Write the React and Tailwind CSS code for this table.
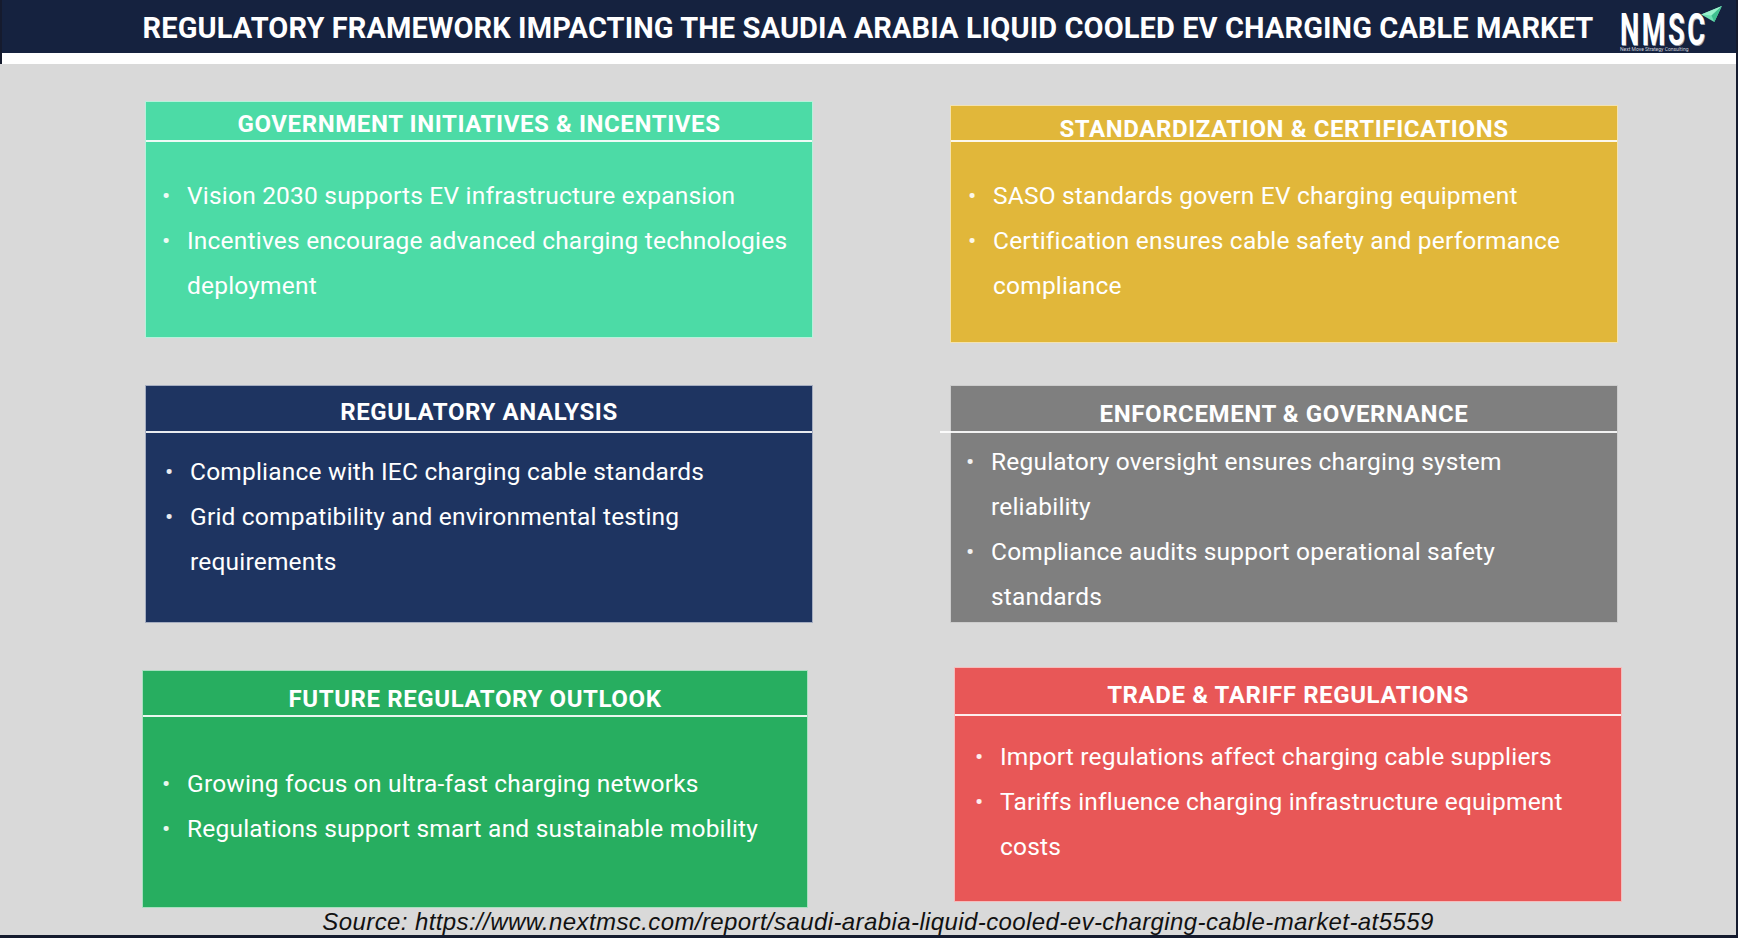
import React from "react";

const cards = [
  {
    key: "gov",
    bg: "bg-[#4cdba6]",
    title: "GOVERNMENT INITIATIVES & INCENTIVES",
    wrap: "mt-[37px] ml-[145px] w-[668px] h-[237px]",
    head: "h-[38px] pt-[8px]",
    body: "pt-[31px] pl-[16px]",
    items: [["Vision 2030 supports EV infrastructure expansion"], ["Incentives encourage advanced charging technologies", "deployment"]],
  },
  {
    key: "std",
    bg: "bg-[#e1b73a]",
    title: "STANDARDIZATION & CERTIFICATIONS",
    wrap: "mt-[41px] ml-[137px] w-[668px] h-[238px]",
    head: "h-[34px] pt-[9px]",
    body: "pt-[31px] pl-[17px]",
    items: [["SASO standards govern EV charging equipment"], ["Certification ensures cable safety and performance", "compliance"]],
  },
  {
    key: "reg",
    bg: "bg-[#1e3461]",
    title: "REGULATORY ANALYSIS",
    wrap: "mt-[42px] ml-[145px] w-[668px] h-[238px]",
    head: "h-[45px] pt-[12px]",
    body: "pt-[16px] pl-[19px]",
    items: [["Compliance with IEC charging cable standards"], ["Grid compatibility and environmental testing", "requirements"]],
  },
  {
    key: "enf",
    bg: "bg-[#7f7f7f]",
    title: "ENFORCEMENT & GOVERNANCE",
    wrap: "mt-[42px] ml-[137px] w-[668px] h-[238px]",
    head: "h-[45px] pt-[14px]",
    body: "pt-[6px] pl-[15px]",
    extendLine: true,
    items: [["Regulatory oversight ensures charging system", "reliability"], ["Compliance audits support operational safety", "standards"]],
  },
  {
    key: "fut",
    bg: "bg-[#27ae60]",
    title: "FUTURE REGULATORY OUTLOOK",
    wrap: "mt-[47px] ml-[142px] w-[666px] h-[238px]",
    head: "h-[44px] pt-[14px]",
    body: "pt-[44px] pl-[19px]",
    items: [["Growing focus on ultra-fast charging networks"], ["Regulations support smart and sustainable mobility"]],
  },
  {
    key: "trade",
    bg: "bg-[#e85757]",
    title: "TRADE & TARIFF REGULATIONS",
    wrap: "mt-[44px] ml-[146px] w-[668px] h-[235px]",
    head: "h-[46px] pt-[13px]",
    body: "pt-[18px] pl-[20px]",
    items: [["Import regulations affect charging cable suppliers"], ["Tariffs influence charging infrastructure equipment", "costs"]],
  },
];

function Card({ c }) {
  return (
    <div className={`${c.wrap} ${c.bg} shrink-0 border border-white/60 text-white`}>
      <div className={`${c.head} text-center text-[24px] leading-[28px] font-bold tracking-[0.6px] whitespace-nowrap`}>
        {c.title}
      </div>
      <div className={`h-[1.5px] bg-white/90 ${c.extendLine ? "-ml-[11px]" : ""}`} />
      <ul className={`${c.body} text-[24.5px] leading-[45px] tracking-[0.2px]`}>
        {c.items.map((lines, i) => (
          <li key={i} className="flex">
            <span className="w-[25px] shrink-0 text-white/90">•</span>
            <span className="whitespace-nowrap">
              {lines.map((l, j) => (
                <React.Fragment key={j}>
                  {j > 0 && <br />}
                  {l}
                </React.Fragment>
              ))}
            </span>
          </li>
        ))}
      </ul>
    </div>
  );
}

function Logo() {
  return (
    <div className="w-[120px] h-full flex flex-col pl-[4px] pt-[15px]">
      <div className="flex items-start h-[31px]">
        <span
          className="inline-block origin-left scale-x-[0.62] text-[44px] leading-[31px] font-bold tracking-[4px] text-white"
          style={{ fontFamily: "Roboto, sans-serif", textShadow: "1px 1px 0 #9ca3af" }}
        >
          NMSC
        </span>
        <svg width="21" height="16" viewBox="0 0 22 17" className="-ml-[60px] -mt-[9px]">
          <polygon points="0,9 22,0 14,17" fill="#6ee0b4" />
          <polygon points="0,9 22,0 11,10" fill="#9af0cc" />
          <polygon points="11,10 22,0 14,17" fill="#3fbf8f" />
        </svg>
      </div>
      <div className="text-[5px] leading-[5px] text-[#cfd3dc] whitespace-nowrap mt-[1px]">
        Next Move Strategy Consulting
      </div>
    </div>
  );
}

export default function App() {
  return (
    <div className="w-[1738px] h-[952px] bg-white overflow-hidden" style={{ fontFamily: "Roboto, 'Open Sans', sans-serif" }}>
      <div className="h-[938px] border-x-2 border-b-[3px] border-[#151b2e] flex flex-col">
        <div className="h-[53px] bg-[#15223f] flex items-stretch shrink-0">
          <div className="w-[118px]" />
          <div className="flex-1 flex items-center justify-center text-white text-[29px] font-bold tracking-[0.1px] whitespace-nowrap pt-[4px]">
            REGULATORY FRAMEWORK IMPACTING THE SAUDIA ARABIA LIQUID COOLED EV CHARGING CABLE MARKET
          </div>
          <Logo />
        </div>
        <div className="h-[11px] bg-white shrink-0" />
        <div className="flex-1 bg-[#d9d9d9] flex flex-col -ml-[2px]">
          <div className="flex items-start">
            <Card c={cards[0]} />
            <Card c={cards[1]} />
          </div>
          <div className="flex items-start">
            <Card c={cards[2]} />
            <Card c={cards[3]} />
          </div>
          <div className="flex items-start">
            <Card c={cards[4]} />
            <Card c={cards[5]} />
          </div>
          <div
            className="text-center italic text-[24px] leading-[24px] text-[#111] pl-[20px] tracking-[0.4px] mt-[2px] whitespace-nowrap"
            style={{ fontFamily: "'Liberation Sans', Arial, sans-serif" }}
          >
            Source: https://www.nextmsc.com/report/saudi-arabia-liquid-cooled-ev-charging-cable-market-at5559
          </div>
        </div>
      </div>
    </div>
  );
}
